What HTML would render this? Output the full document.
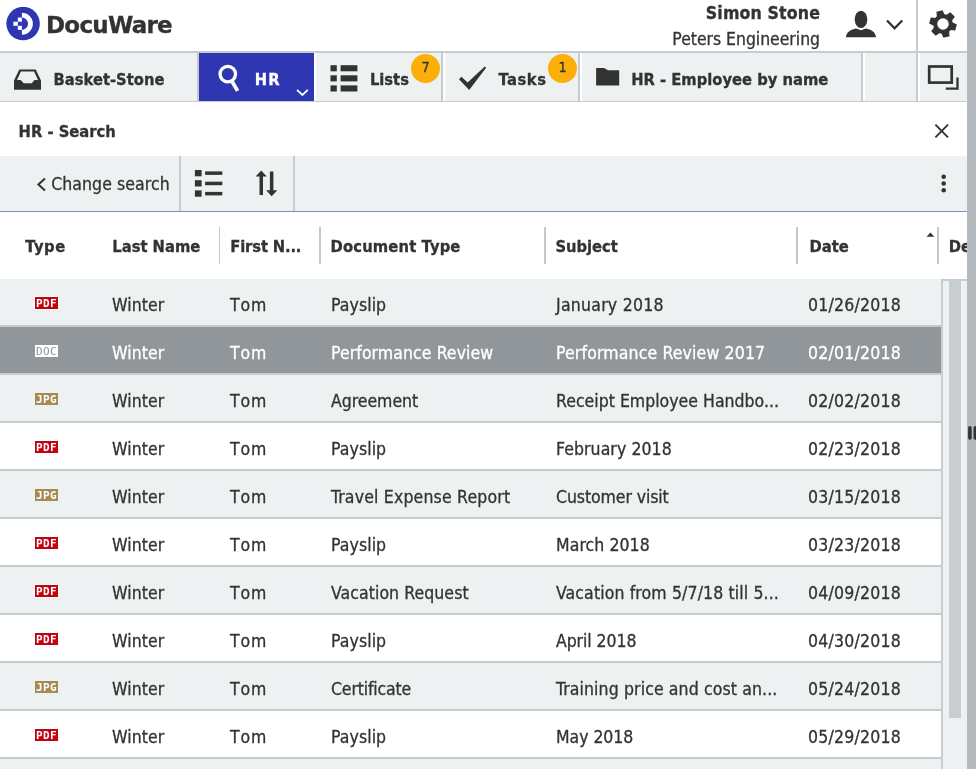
<!DOCTYPE html>
<html lang="en">
<head>
<meta charset="utf-8">
<title>DocuWare</title>
<style>
*{box-sizing:border-box;margin:0;padding:0}
html,body{width:976px;height:769px;overflow:hidden;background:#fff}
body{position:relative;font-family:"DejaVu Sans Condensed","Liberation Sans",sans-serif;font-size:17.5px;color:#333;letter-spacing:.08px;-webkit-text-stroke:.3px currentColor}
#wrap{position:absolute;left:0;top:0;width:976px;height:769px;will-change:transform;transform:translateZ(0)}
.abs{position:absolute}
.b{font-weight:bold;font-size:16.4px;letter-spacing:0}
.t{position:absolute;white-space:nowrap;line-height:20px}
/* header */
#hdr{left:0;top:0;width:967px;height:51px;background:#fff}
#hline{left:0;top:51px;width:967px;height:2px;background:#c5cbce}
#tabs{left:0;top:53px;width:967px;height:48px;background:#edf1f2}
#tline{left:0;top:100.7px;width:967px;height:1.6px;background:#c5cbce}
.vs{position:absolute;top:53px;height:47.8px;width:1.9px;background:#c5cbce;box-shadow:2.2px 0 0 #fff}
#split{left:967px;top:0;width:9px;height:769px;background:#b4babd}
/* toolbar */
#tool{left:0;top:155.7px;width:967px;height:55px;background:#edf1f2}
#toolline{left:0;top:210.6px;width:967px;height:1.5px;background:#868cca}
.ts{position:absolute;top:155.7px;height:55px;width:2px;background:#c5cbce}
/* table */
.cs{position:absolute;top:227px;height:37px;width:2px;background:#c7c7c7}
.row{position:absolute;left:0;width:941px;height:48px;border-bottom:2px solid #c5cacd;background:#fff}
.row.g{background:#edf1f2}
.row.sel{background:#91969a;color:#fff;border-bottom-color:#c9ced1}
.row span{position:absolute;top:16px;line-height:20px;white-space:nowrap}
.c1{left:112px}.c2{left:230px;letter-spacing:.9px;font-kerning:none}.c3{left:331px}.c4{left:556px}.c5{left:808px;letter-spacing:.22px}
.ic{-webkit-text-stroke:0;position:absolute;left:34.6px;top:18px;width:23.4px;height:11.8px;font-family:"DejaVu Sans Mono","Liberation Mono",monospace;font-weight:bold;font-size:11px;line-height:14px!important;letter-spacing:.45px;padding-left:.5px;text-align:center;color:#fff;top:18px!important;overflow:hidden}
.pdf{background:#be0510;box-shadow:0 0 0 1px rgba(255,255,255,.55)}
.jpg{background:#a48b55}
.doc{background:#fff;color:#8f9599;font-weight:normal}
.badge{width:29px;height:29px;border-radius:50%;background:#fcaf09;color:#333;font-size:14.4px;line-height:27px;text-align:center;letter-spacing:0}
</style>
</head>
<body>
<div id="wrap">
<div class="abs" id="hdr"></div>
<div class="abs" id="hline"></div>
<div class="abs" id="tabs"></div>
<div class="abs" id="tline"></div>
<div class="abs" id="tool"></div>
<div class="abs" id="toolline"></div>


<!-- HEADER -->
<svg class="abs" style="left:6px;top:7px" width="35" height="35" viewBox="0 0 35 35">
  <circle cx="17.1" cy="16.55" r="16.75" fill="#2f36b2"/>
  <path d="M15.9 5.8 A10.95 10.95 0 0 1 15.9 27.7 Z" fill="#fff"/>
  <path d="M15.9 10.6 A6.15 6.15 0 0 1 15.9 22.9 Z" fill="#2f36b2"/>
  <rect x="11.8" y="10.6" width="4.1" height="4.1" fill="#fff"/>
  <rect x="7.4" y="14.7" width="4.4" height="4.1" fill="#fff"/>
  <rect x="11.8" y="18.8" width="4.1" height="4.1" fill="#fff"/>
</svg>
<div class="t" style="left:46px;top:9.3px;font-family:'DejaVu Sans','Liberation Sans',sans-serif;font-weight:bold;font-size:23px;line-height:32px;letter-spacing:-.75px;color:#333">DocuWare</div>
<div class="t" style="right:156px;top:2.6px;font-weight:bold;font-size:17.6px;letter-spacing:.12px">Simon Stone</div>
<div class="t" style="right:156px;top:28.5px;font-size:17.4px;letter-spacing:0">Peters Engineering</div>
<svg class="abs" style="left:844px;top:9px" width="62" height="30" viewBox="844 9 62 30">
  <ellipse cx="861" cy="19.4" rx="6.3" ry="8.6" fill="#333"/>
  <path d="M845.9 37.2 C846.5 32 851 29.6 856 28.6 L861 30.2 L866 28.6 C871 29.6 875.5 32 876 37.2 Z" fill="#333"/>
  <path d="M887 20.5 L894.6 28.3 L902.2 20.5" fill="none" stroke="#333" stroke-width="2.3"/>
</svg>
<div class="abs" style="left:916px;top:0;width:2px;height:101px;background:#c5cbce"></div>
<div class="abs" style="left:918px;top:53px;width:2.1px;height:47.8px;background:#fff"></div>
<svg class="abs" style="left:927.6px;top:9.1px" width="30" height="30" viewBox="-15 -15 30 30">
  <g fill="#333"><circle r="9.9"/><path d="M-4 -8.6 L-3.2 -13.5 H3.2 L4 -8.6 Z" transform="rotate(-15)"/><path d="M-4 -8.6 L-3.2 -13.5 H3.2 L4 -8.6 Z" transform="rotate(45)"/><path d="M-4 -8.6 L-3.2 -13.5 H3.2 L4 -8.6 Z" transform="rotate(105)"/><path d="M-4 -8.6 L-3.2 -13.5 H3.2 L4 -8.6 Z" transform="rotate(165)"/><path d="M-4 -8.6 L-3.2 -13.5 H3.2 L4 -8.6 Z" transform="rotate(225)"/><path d="M-4 -8.6 L-3.2 -13.5 H3.2 L4 -8.6 Z" transform="rotate(285)"/></g>
  <circle r="5.75" fill="#fff"/>
</svg>


<!-- TABS -->
<svg class="abs" style="left:13px;top:68px" width="29" height="23" viewBox="13 68 29 23">
  <path d="M14 80.6 L19.3 69.4 H35.7 L41 80.6 V89.7 H14 Z" fill="#333"/>
  <path d="M17 80 L20.9 71.4 H34.1 L38 80 H34.4 L31.8 83.2 H23.7 L20.6 80 Z" fill="#edf1f2"/>
</svg>
<div class="t b" style="left:53.6px;top:69.6px">Basket-Stone</div>
<div class="vs" style="left:197px"></div>
<div class="abs" style="left:199px;top:53px;width:114.8px;height:47.8px;background:#2f36b2;box-shadow:2.2px 0 0 #fff"></div>
<svg class="abs" style="left:215px;top:62px" width="26" height="31" viewBox="215 62 26 31">
  <circle cx="227.8" cy="74.1" r="7.75" fill="none" stroke="#fff" stroke-width="3.3"/>
  <path d="M231.6 80.8 L237.6 90.9" stroke="#fff" stroke-width="3.8" fill="none"/>
</svg>
<div class="t b" style="left:254.8px;top:69.6px;color:#fff;letter-spacing:1.2px">HR</div>
<svg class="abs" style="left:295px;top:88px" width="15" height="9" viewBox="295 88 15 9">
  <path d="M297 89.9 L302.4 95 L307.8 89.9" fill="none" stroke="#fff" stroke-width="1.8"/>
</svg>
<svg class="abs" style="left:330px;top:65px" width="28" height="27" viewBox="330 65 28 27">
  <g fill="#333">
  <rect x="330.5" y="65.2" width="6.3" height="6.1"/><rect x="340.6" y="65.2" width="16.8" height="6.1"/>
  <rect x="330.5" y="75.3" width="6.3" height="6.1"/><rect x="340.6" y="75.3" width="16.8" height="6.1"/>
  <rect x="330.5" y="85.4" width="6.3" height="6.1"/><rect x="340.6" y="85.4" width="16.8" height="6.1"/>
  </g>
</svg>
<div class="t b" style="left:369.9px;top:69.6px">Lists</div>
<div class="abs badge" style="left:411.1px;top:54px">7</div>
<div class="vs" style="left:441.2px"></div>
<svg class="abs" style="left:458px;top:65px" width="30" height="27" viewBox="458 65 30 27">
  <path d="M459 79.3 L461.4 76.8 L467.6 82.5 L484.8 66.6 L486.1 67.7 L469.2 89.9 Z" fill="#333"/>
</svg>
<div class="t b" style="left:498.5px;top:69.6px;letter-spacing:.55px">Tasks</div>
<div class="abs badge" style="left:548.2px;top:54px">1</div>
<div class="vs" style="left:578.2px"></div>
<svg class="abs" style="left:595px;top:66px" width="26" height="21" viewBox="595 66 26 21">
  <path d="M596.1 68.4 Q596.1 67.9 596.6 67.9 H604.1 L607.9 70.2 H618.7 Q619.2 70.2 619.2 70.7 V84.9 Q619.2 85.4 618.7 85.4 H596.6 Q596.1 85.4 596.1 84.9 Z" fill="#333"/>
</svg>
<div class="t b" style="left:631.2px;top:69.6px">HR - Employee by name</div>
<div class="vs" style="left:861px"></div>
<svg class="abs" style="left:926px;top:63px" width="34" height="28" viewBox="926 63 34 28">
  <rect x="929.2" y="66.5" width="22.5" height="16.1" fill="none" stroke="#333" stroke-width="2.7"/>
  <path d="M957.5 77.5 V88.7 H945.8" fill="none" stroke="#333" stroke-width="2.3"/>
</svg>

<!-- TITLE -->
<div class="t b" style="left:18.6px;top:121.6px">HR - Search</div>
<svg class="abs" style="left:932px;top:122px" width="19" height="18" viewBox="932 122 19 18">
  <path d="M935.4 124.7 L948 137.4 M948 124.7 L935.4 137.4" stroke="#333" stroke-width="1.9" fill="none"/>
</svg>

<!-- TOOLBAR -->
<svg class="abs" style="left:35px;top:176px" width="13" height="17" viewBox="35 176 13 17">
  <path d="M45 178.4 L38.4 184.5 L45 190.6" fill="none" stroke="#333" stroke-width="2"/>
</svg>
<div class="t" style="left:51.2px;top:173.5px">Change search</div>
<div class="ts" style="left:179px"></div>
<svg class="abs" style="left:194px;top:169px" width="30" height="29" viewBox="194 169 30 29">
  <g fill="#333">
  <rect x="194.9" y="170" width="6.7" height="6.3"/><rect x="205.1" y="171.4" width="17.2" height="3.5"/>
  <rect x="194.9" y="180.2" width="6.7" height="6.3"/><rect x="205.1" y="181.7" width="17.2" height="3.5"/>
  <rect x="194.9" y="190.4" width="6.7" height="6.3"/><rect x="205.1" y="191.9" width="17.2" height="3.5"/>
  </g>
</svg>
<svg class="abs" style="left:254px;top:169px" width="25" height="29" viewBox="254 169 25 29">
  <g fill="#333">
  <path d="M261.2 170.6 L266.8 176.6 H263 V195.1 H259.5 V176.6 H255.6 Z"/>
  <path d="M271.7 196.3 L266.1 190.3 H269.9 V171.6 H273.4 V190.3 H277.3 Z"/>
  </g>
</svg>
<div class="ts" style="left:292.9px"></div>
<svg class="abs" style="left:940px;top:173px" width="8" height="22" viewBox="940 173 8 22">
  <g fill="#333"><circle cx="943.7" cy="176.8" r="2.3"/><circle cx="943.7" cy="183.5" r="2.3"/><circle cx="943.7" cy="190.2" r="2.3"/></g>
</svg>

<!-- TABLE HEADER -->
<div class="t b" style="left:25.2px;top:236.5px;letter-spacing:.6px">Type</div>
<div class="t b" style="left:112.3px;top:236.5px">Last Name</div>
<div class="cs" style="left:219px;width:1px"></div>
<div class="t b" style="left:230.3px;top:236.5px;letter-spacing:-.15px">First N...</div>
<div class="cs" style="left:319px"></div>
<div class="t b" style="left:330.6px;top:236.5px;letter-spacing:.15px">Document Type</div>
<div class="cs" style="left:544px"></div>
<div class="t b" style="left:555.4px;top:236.5px">Subject</div>
<div class="cs" style="left:796px"></div>
<div class="t b" style="left:809.6px;top:236.5px">Date</div>
<svg class="abs" style="left:926px;top:232px" width="9" height="6" viewBox="0 0 9 6"><path d="M0.5 4.8 L4.4 0.6 L8.3 4.8 Z" fill="#333"/></svg>
<div class="cs" style="left:937px"></div>
<div class="t b" style="left:948.8px;top:236.5px">Descr</div>

<!-- TABLE ROWS -->
<div id="rows">
<div class="row g" style="top:279.3px"><span class="ic pdf">PDF</span><span class="c1">Winter</span><span class="c2">Tom</span><span class="c3">Payslip</span><span class="c4" style="letter-spacing:0.25px">January 2018</span><span class="c5">01/26/2018</span></div>
<div class="row sel" style="top:327.3px"><span class="ic doc">DOC</span><span class="c1">Winter</span><span class="c2">Tom</span><span class="c3">Performance Review</span><span class="c4" style="letter-spacing:0.15px">Performance Review 2017</span><span class="c5">02/01/2018</span></div>
<div class="row g" style="top:375.3px"><span class="ic jpg">JPG</span><span class="c1">Winter</span><span class="c2">Tom</span><span class="c3" style="letter-spacing:-0.03px">Agreement</span><span class="c4" style="letter-spacing:0.02px">Receipt Employee Handbo...</span><span class="c5">02/02/2018</span></div>
<div class="row" style="top:423.3px"><span class="ic pdf">PDF</span><span class="c1">Winter</span><span class="c2">Tom</span><span class="c3">Payslip</span><span class="c4">February 2018</span><span class="c5">02/23/2018</span></div>
<div class="row g" style="top:471.3px"><span class="ic jpg">JPG</span><span class="c1">Winter</span><span class="c2">Tom</span><span class="c3" style="letter-spacing:0.18px">Travel Expense Report</span><span class="c4" style="letter-spacing:-0.09px">Customer visit</span><span class="c5">03/15/2018</span></div>
<div class="row" style="top:519.3px"><span class="ic pdf">PDF</span><span class="c1">Winter</span><span class="c2">Tom</span><span class="c3">Payslip</span><span class="c4">March 2018</span><span class="c5">03/23/2018</span></div>
<div class="row g" style="top:567.3px"><span class="ic pdf">PDF</span><span class="c1">Winter</span><span class="c2">Tom</span><span class="c3">Vacation Request</span><span class="c4" style="letter-spacing:0.13px">Vacation from 5/7/18 till 5...</span><span class="c5">04/09/2018</span></div>
<div class="row" style="top:615.3px"><span class="ic pdf">PDF</span><span class="c1">Winter</span><span class="c2">Tom</span><span class="c3">Payslip</span><span class="c4" style="letter-spacing:-0.07px">April 2018</span><span class="c5">04/30/2018</span></div>
<div class="row g" style="top:663.3px"><span class="ic jpg">JPG</span><span class="c1">Winter</span><span class="c2">Tom</span><span class="c3" style="letter-spacing:-0.15px">Certificate</span><span class="c4" style="letter-spacing:0.12px">Training price and cost an...</span><span class="c5">05/24/2018</span></div>
<div class="row" style="top:711.3px"><span class="ic pdf">PDF</span><span class="c1">Winter</span><span class="c2">Tom</span><span class="c3">Payslip</span><span class="c4" style="letter-spacing:-0.04px">May 2018</span><span class="c5">05/29/2018</span></div>
<div class="row g" style="top:759.3px"><span class="ic pdf">PDF</span><span class="c1">Winter</span><span class="c2">Tom</span><span class="c3">Payslip</span><span class="c4">June 2018</span><span class="c5">06/27/2018</span></div>
</div>
<div class="abs" id="split"></div>
<!-- SCROLLBAR -->
<div class="abs" style="left:941px;top:279.2px;width:26px;height:490px;background:#eef1f2;border-left:2px solid #c8cdd1;border-top:2px solid #c8cdd1"></div>
<div class="abs" style="left:949.2px;top:279.2px;width:11.7px;height:439px;background:#c8cdd1"></div>
<svg class="abs" style="left:967px;top:425px" width="9" height="16" viewBox="967 425 9 16">
  <path d="M969.9 427.9 V438" stroke="#333" stroke-width="3.6" stroke-linecap="round"/>
  <path d="M975.3 427.9 V438" stroke="#333" stroke-width="3.6" stroke-linecap="round"/>
</svg>


</div>
</body>
</html>
